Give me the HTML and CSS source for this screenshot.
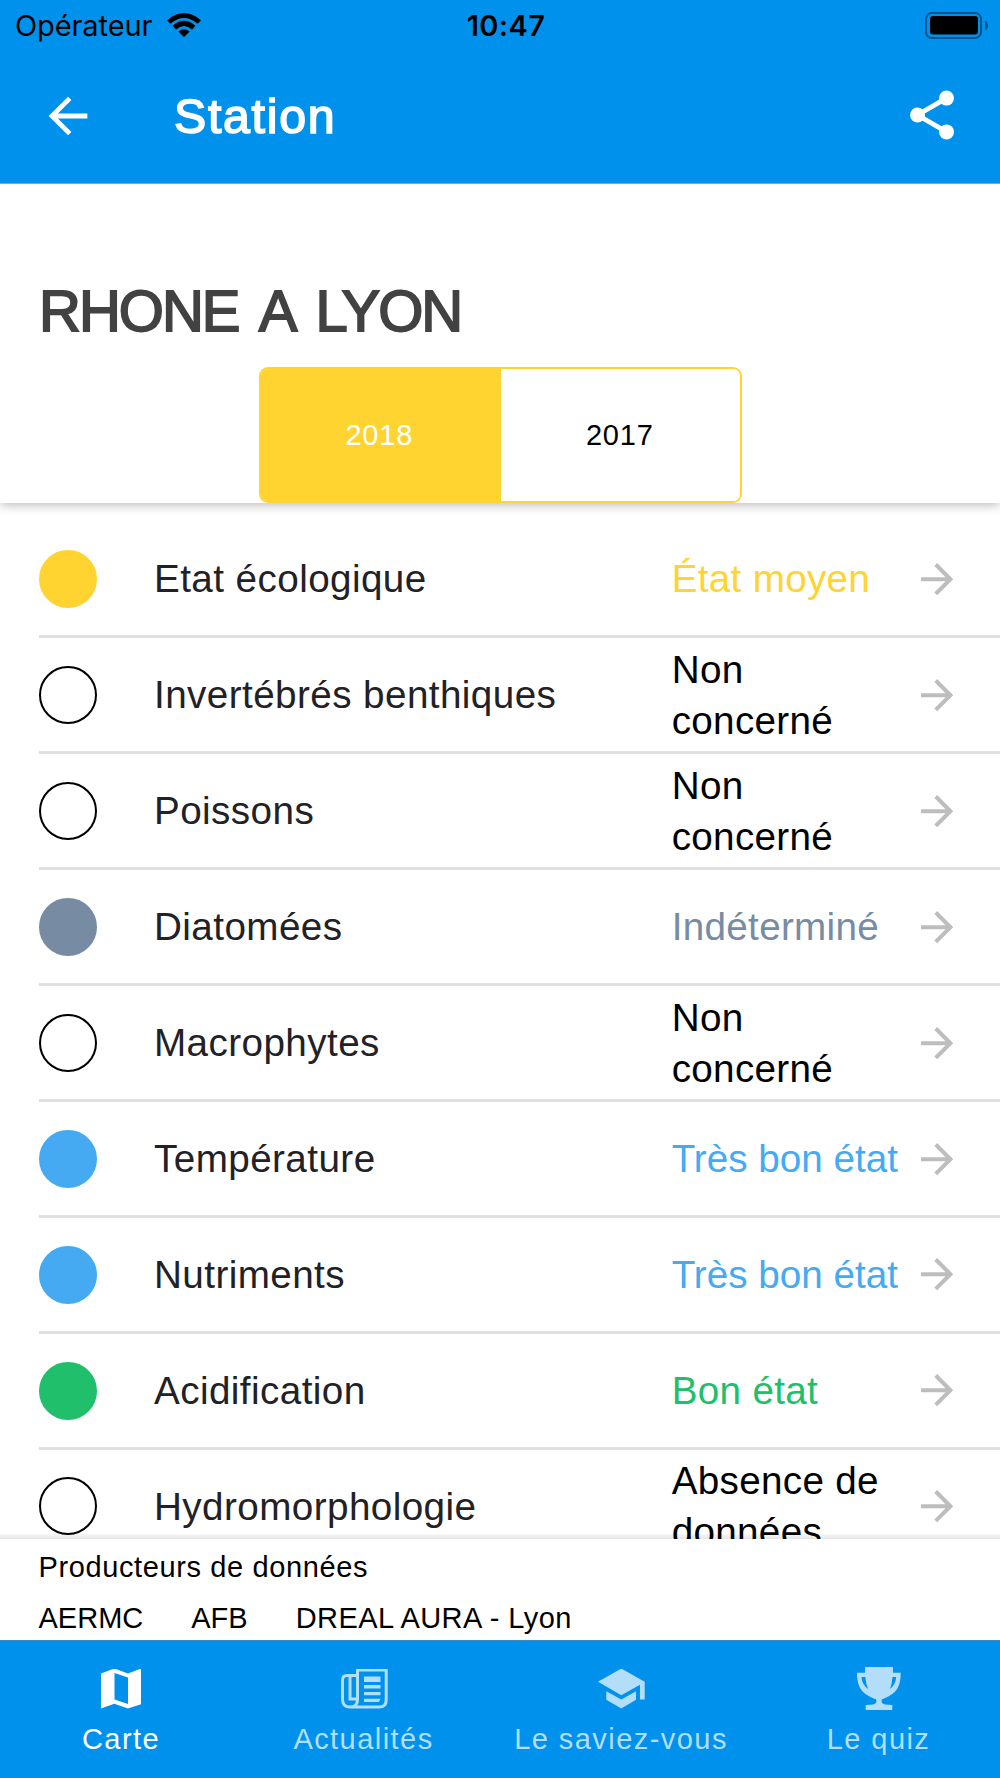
FILE: index.html
```
<!DOCTYPE html>
<html lang="fr">
<head>
<meta charset="utf-8">
<title>Station</title>
<link rel="stylesheet" href="styles.css">
</head>
<body>
<svg class="defs" aria-hidden="true">
  <symbol id="arrow" viewBox="0 0 24 24"><path d="M12 4l-1.41 1.41L16.17 11H4v2h12.17l-5.58 5.59L12 20l8-8z"/></symbol>
</svg>
<div class="screen">
  <header class="header">
    <div class="status">
      <div class="carrier"><span>Opérateur</span>
        <svg class="wifi" viewBox="0 0 34 24"><path d="M0 7.200Q17-7.200 34 7.200L30.600 10.800Q17-1 3.400 10.800Z"/><path d="M5.600 12.800Q17 2.800 28.400 12.800L25 16.400Q17 9.400 9 16.400Z"/><path d="M11.400 18.600Q17 14 22.600 18.600L17 24.200Z"/></svg>
      </div>
      <div class="time">10:47</div>
      <svg class="battery" viewBox="0 0 64 28"><rect class="shell" x="1" y="1" width="55" height="25" rx="6"/><rect x="5" y="4" width="48" height="18.500" rx="3"/><path class="tip" d="M60 8.500q3 1.500 3 5t-3 5z"/></svg>
    </div>
    <div class="toolbar">
      <svg class="back"><use href="#arrow"/></svg>
      <h1 class="title">Station</h1>
      <svg class="share" viewBox="0 0 24 24"><path d="M18 5L6 12l12 7"/><circle cx="18" cy="5" r="3.100"/><circle cx="6" cy="12" r="3.100"/><circle cx="18" cy="19" r="3.100"/></svg>
    </div>
  </header>

  <section class="summary">
    <h2 class="name">RHONE A LYON</h2>
    <div class="years"><button class="year selected">2018</button><button class="year">2017</button></div>
  </section>

  <main class="list">
    <div class="row medium"><i class="dot"></i><span class="label">Etat écologique</span><span class="value">État moyen</span><svg class="go"><use href="#arrow"/></svg></div>
    <div class="row"><i class="dot"></i><span class="label">Invertébrés benthiques</span><span class="value">Non concerné</span><svg class="go"><use href="#arrow"/></svg></div>
    <div class="row"><i class="dot"></i><span class="label">Poissons</span><span class="value">Non concerné</span><svg class="go"><use href="#arrow"/></svg></div>
    <div class="row unknown"><i class="dot"></i><span class="label">Diatomées</span><span class="value">Indéterminé</span><svg class="go"><use href="#arrow"/></svg></div>
    <div class="row"><i class="dot"></i><span class="label">Macrophytes</span><span class="value">Non concerné</span><svg class="go"><use href="#arrow"/></svg></div>
    <div class="row great"><i class="dot"></i><span class="label">Température</span><span class="value">Très bon état</span><svg class="go"><use href="#arrow"/></svg></div>
    <div class="row great"><i class="dot"></i><span class="label">Nutriments</span><span class="value">Très bon état</span><svg class="go"><use href="#arrow"/></svg></div>
    <div class="row good"><i class="dot"></i><span class="label">Acidification</span><span class="value">Bon état</span><svg class="go"><use href="#arrow"/></svg></div>
    <div class="row"><i class="dot"></i><span class="label">Hydromorphologie</span><span class="value">Absence de données</span><svg class="go"><use href="#arrow"/></svg></div>
  </main>

  <footer class="producers">
    <p class="heading">Producteurs de données</p>
    <p class="names"><span>AERMC</span><span>AFB</span><span class="regional">DREAL AURA - Lyon</span></p>
  </footer>

  <nav class="tabs">
    <a class="tab active">
      <svg class="icon map" viewBox="0 0 40 40"><path fill-rule="evenodd" d="M0 5L13.300 0 27 5 40 0V35.700L27 40 13.300 35.300 0 40ZM13.500 4.500V31L27 35.500V9Z"/></svg>
      <span>Carte</span></a>
    <a class="tab">
      <svg class="icon news" viewBox="0 0 47 40"><path class="line" d="M16.500 7H6q-4.500 0-4.500 4.500V31q0 7.500 7.500 7.500H38.200q7 0 7-7V1.500H16.500V31q0 7.500-7 7.500M9 8V30.500H15.500"/><path d="M23 8H39.500V13.500H23ZM23 16.500H39.500V20H23ZM23 23.500H39.500V26.700H23ZM23 30.300H39.500L38 33.500H23Z"/></svg>
      <span>Actualités</span></a>
    <a class="tab">
      <svg class="icon cap" viewBox="0 0 47 40"><path d="M23.300 0L46.700 13.300V31H42V16.300L23.300 26.700 0 13.300ZM8.300 22.700L23.300 31 38 22.700V31.300L23.300 40 8.300 31.300Z"/></svg>
      <span>Le saviez-vous</span></a>
    <a class="tab">
      <svg class="icon cup" viewBox="0 0 44 43"><path fill-rule="evenodd" d="M8 0H36V5.700H43.700C43.700 22 38 27 24.700 32.500V35.500Q26 38 35.300 38V43H8.700V38Q18 38 19.300 35.500V32.500C6 27 0 22 0 5.700H8ZM8.300 10H4.500Q5 17.500 11 22Q9 17 8.300 10ZM35.500 10Q35 17 33 22Q38.500 17.500 39.300 10Z"/></svg>
      <span>Le quiz</span></a>
  </nav>
</div>
</body>
</html>
```
FILE: styles.css
```
* { box-sizing: border-box; }
body { margin: 0; background: #fff; color: #000; font-family: "Liberation Sans", Arial, sans-serif; }
h1, h2, p { margin: 0; font-weight: 400; }
svg { display: block; flex: none; }
.defs { position: absolute; width: 0; height: 0; }

.screen { display: flex; flex-direction: column; width: 1000px; height: 1778px; overflow: hidden; }

.header { flex: none; height: 184px; background: #0091ec; border-bottom: 1px solid #5cb8f3; }
.status { display: grid; grid-template-columns: 1fr auto 1fr; align-items: center; height: 50px; padding: 0 11px 0 15px; font: 29px/52px Inter, sans-serif; }
.carrier { display: flex; align-items: center; gap: 15px; letter-spacing: -0.1px; }
.wifi { width: 34px; height: 24px; margin-bottom: 2px; }
.time { font-weight: 600; letter-spacing: 0.4px; padding-left: 8px; }
.battery { justify-self: end; width: 64px; height: 28px; margin-bottom: 1px; }
.shell { fill: none; stroke: #00568d; stroke-width: 2; }
.tip { fill: #00568d; }
.toolbar { display: flex; align-items: center; height: 132px; padding: 0 39px; color: #fff; }
.back { width: 58px; height: 58px; fill: #fff; transform: scaleX(-1); }
.title { flex: 1; margin-left: 77px; font-size: 48.3px; line-height: 58px; letter-spacing: 1.7px; -webkit-text-stroke: 1.6px #fff; }
.share { width: 58px; height: 58px; margin-bottom: 2px; fill: #fff; }
.share path { fill: none; stroke: #fff; stroke-width: 2; }

.summary { flex: none; display: flex; flex-direction: column; justify-content: space-between; height: 319px; padding-top: 92px; box-shadow: 0 2px 10px rgba(0, 0, 0, 0.27); clip-path: inset(0 0 -14px 0); }
.name { padding-left: 39px; font-size: 58px; line-height: 70px; letter-spacing: -2px; word-spacing: 9.3px; color: #424242; -webkit-text-stroke: 1.8px #424242; }
.years { display: flex; align-self: center; width: 483px; height: 136px; border: 2.500px solid #ffd330; border-radius: 9px; overflow: hidden; }
.year { flex: 1; margin: 0; padding: 0 1px 0 0; border: 0; background: #fff; color: #000; font: 29px "Liberation Sans", Arial, sans-serif; letter-spacing: 0.8px; }
.year.selected { padding-right: 3px; background: #ffd330; color: #fff; }

.list { flex: none; height: 1036px; padding-top: 19.500px; overflow: hidden; background: linear-gradient(#f7f7f7, #e6e6e6) bottom / 100% 5px no-repeat; }
.row { display: flex; align-items: center; height: 115.950px; margin-left: 38.500px; padding-right: 39px; border-bottom: 3px solid #e0e0e0; font-size: 38.650px; line-height: 51px; }
.dot { flex: none; width: 58px; height: 58px; border: 2.500px solid #000; border-radius: 50%; }
.label { flex: 1; margin-left: 57.500px; color: #212126; letter-spacing: 0.42px; }
.value { width: 241px; padding-right: 8px; letter-spacing: 0.3px; }
.go { width: 48.300px; height: 48.300px; fill: #bdbdbd; }
.medium .value { color: #ffd330; }
.medium .dot { background: #ffd330; border-color: #ffd330; }
.unknown .value { color: #778ca3; }
.unknown .dot { background: #778ca3; border-color: #778ca3; }
.great .value { color: #45aaf2; letter-spacing: 0; }
.great .dot { background: #45aaf2; border-color: #45aaf2; }
.good .value { color: #20bf6b; }
.good .dot { background: #20bf6b; border-color: #20bf6b; }

.producers { flex: none; height: 101px; padding: 3px 38.500px; font-size: 29px; line-height: 51px; }
.heading { letter-spacing: 0.62px; }
.names { display: flex; gap: 48px; }
.regional { letter-spacing: 0.45px; }

.tabs { flex: 1; display: grid; grid-template-columns: 242px 243px 272px 243px; border-top: 1px solid #3389c4; background: #0091ec; }
.tab { display: flex; flex-direction: column; align-items: center; gap: 9px; padding-top: 26px; color: #b2def9; fill: #b2def9; font-size: 29px; line-height: 40px; letter-spacing: 1.45px; }
.tab.active { color: #fff; fill: #fff; }
.icon { height: 43px; }
.map { width: 40px; padding: 1.500px 0; }
.news, .cap { width: 47px; padding: 1.500px 0; }
.news { margin-left: 2px; }
.cup { width: 44px; }
.line { fill: none; stroke: #b2def9; stroke-width: 3; }
```
